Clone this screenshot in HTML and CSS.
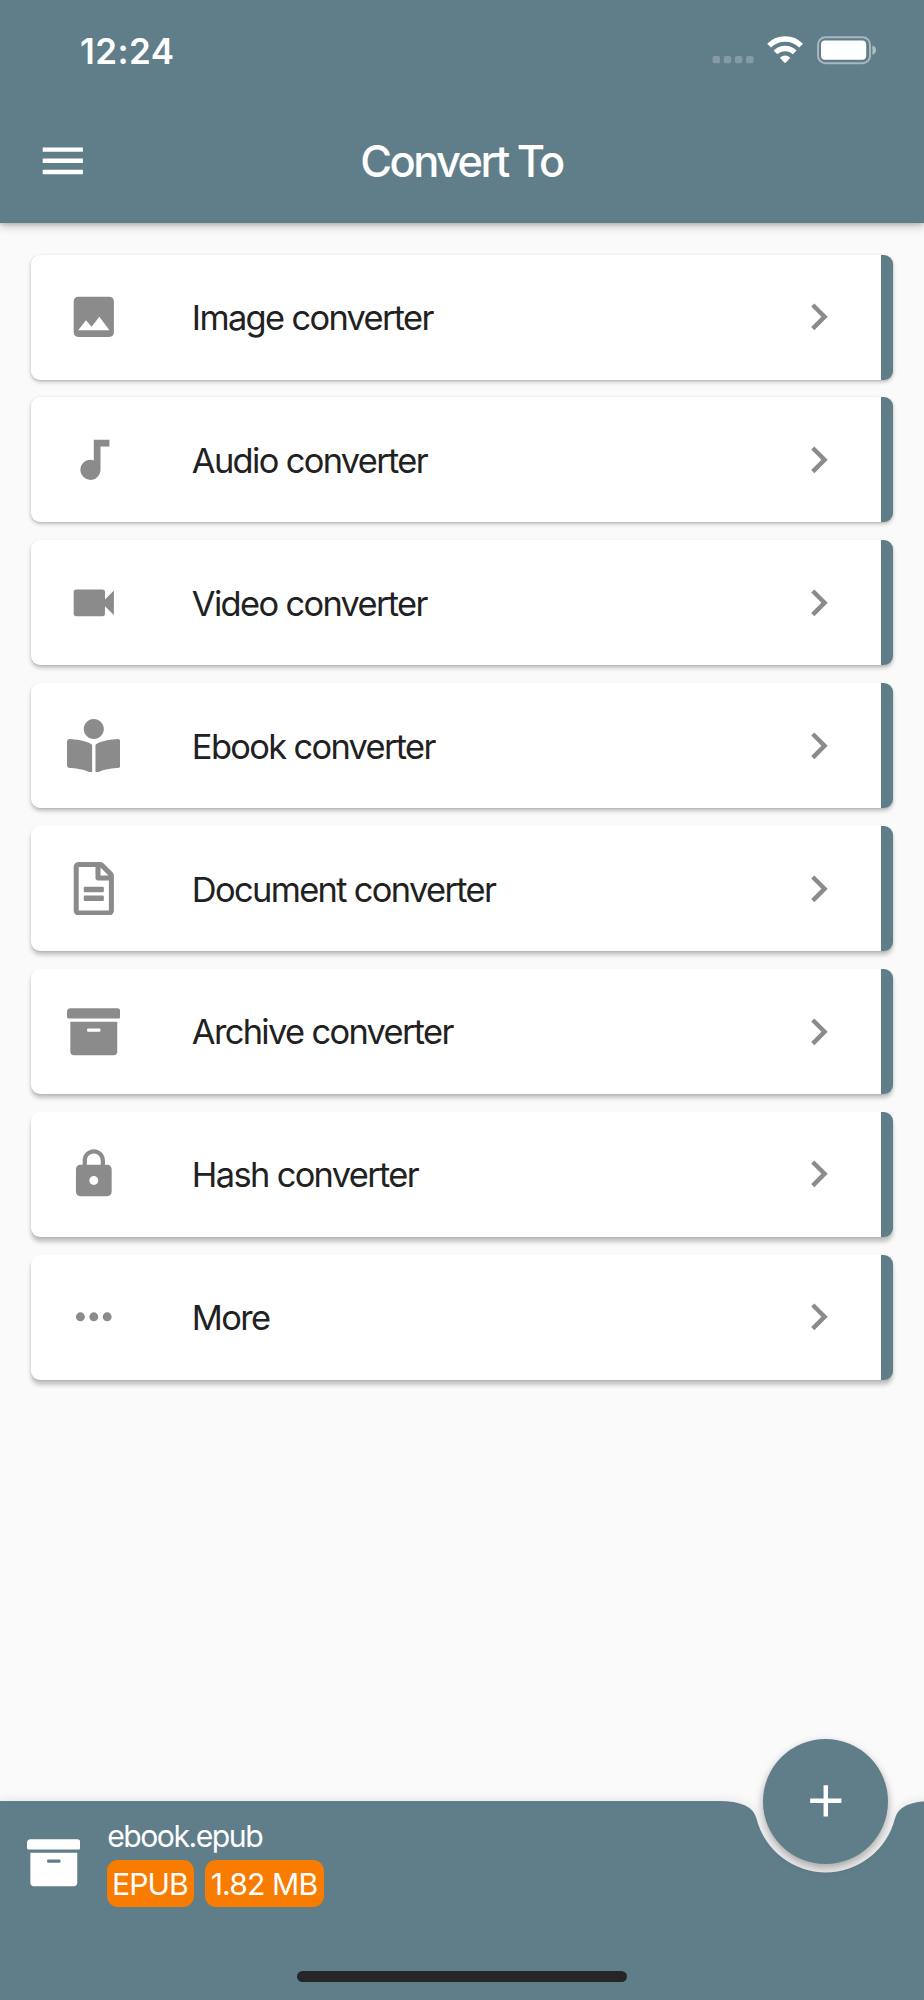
FILE: index.html
```html
<!DOCTYPE html>
<html lang="en">
<head>
<meta charset="utf-8">
<title>Convert To</title>
<link rel="stylesheet" href="styles.css">
</head>
<body>
<div class="screen">
  <header class="header">
    <div class="status">
      <span class="time">12:24</span>
      <svg class="status-icons" width="168" height="32" viewBox="0 0 168 32">
        <g fill="#fff" fill-opacity=".23">
          <rect x="0.5" y="22" width="7.6" height="7.2" rx="2"/>
          <rect x="11.7" y="22" width="7.6" height="7.2" rx="2"/>
          <rect x="22.8" y="22" width="7.6" height="7.2" rx="2"/>
          <rect x="34" y="22" width="7.6" height="7.2" rx="2"/>
        </g>
        <g transform="translate(55.3 2.6)" fill="none" stroke="#fff" stroke-width="5.4">
          <path d="M1.8 9.1A22.5 22.5 0 0 1 33.8 9.1"/>
          <path d="M8.2 15.8A13.6 13.6 0 0 1 27.4 15.8"/>
          <path d="M12.6 21.1Q17.8 16.8 23 21.1L18.6 26Q17.8 26.8 17 26Z" fill="#fff" stroke="none"/>
        </g>
        <rect x="106" y="3.2" width="52" height="26" rx="7.5" fill="none" stroke="#fff" stroke-opacity=".45" stroke-width="2"/>
        <rect x="109" y="6.6" width="45.2" height="19.2" rx="4" fill="#fff"/>
        <path d="M160.4 11.6q3.6 1.2 3.6 4.6t-3.6 4.6z" fill="#fff" fill-opacity=".5"/>
      </svg>
    </div>
    <div class="appbar">
      <svg class="icon menu" viewBox="0 0 24 24"><path d="M3 18h18v-2H3v2zm0-5h18v-2H3v2zm0-7v2h18V6H3z"/></svg>
      <h1 class="title">Convert To</h1>
    </div>
  </header>

  <main class="list">
    <a class="card">
      <svg class="icon" viewBox="0 0 24 24"><path d="M21 19V5c0-1.1-.9-2-2-2H5c-1.1 0-2 .9-2 2v14c0 1.1.9 2 2 2h14c1.1 0 2-.9 2-2zM8.5 13.5l2.5 3.01L14.5 12l4.5 6H5l3.5-4.5z"/></svg>
      <span class="label">Image converter</span>
      <svg class="icon" viewBox="0 0 24 24"><path d="M10 6L8.59 7.41 13.17 12l-4.58 4.59L10 18l6-6z"/></svg>
    </a>
    <a class="card">
      <svg class="icon" viewBox="0 0 24 24"><path d="M12 3v9.28c-.47-.17-.97-.28-1.5-.28C8.01 12 6 14.01 6 16.5S8.01 21 10.5 21c2.31 0 4.2-1.75 4.45-4H15V6h4V3h-7z"/></svg>
      <span class="label">Audio converter</span>
      <svg class="icon" viewBox="0 0 24 24"><path d="M10 6L8.59 7.41 13.17 12l-4.58 4.59L10 18l6-6z"/></svg>
    </a>
    <a class="card">
      <svg class="icon" viewBox="0 0 24 24"><path d="M17 10.5V7c0-.55-.45-1-1-1H4c-.55 0-1 .45-1 1v10c0 .55.45 1 1 1h12c.55 0 1-.45 1-1v-3.5l4 4v-11l-4 4z"/></svg>
      <span class="label">Video converter</span>
      <svg class="icon" viewBox="0 0 24 24"><path d="M10 6L8.59 7.41 13.17 12l-4.58 4.59L10 18l6-6z"/></svg>
    </a>
    <a class="card">
      <svg class="icon" viewBox="0 0 512 512"><path d="M352 96c0-53.02-42.98-96-96-96s-96 42.98-96 96 42.98 96 96 96 96-42.98 96-96zM233.59 241.1c-59.33-36.32-155.43-46.3-203.79-49.05C13.55 191.13 0 203.51 0 219.14v222.8c0 14.33 11.59 26.28 26.49 27.05 43.66 2.29 131.99 10.68 193.04 41.43 9.37 4.72 20.48-1.71 20.48-11.87V252.56c-.01-4.67-2.32-8.95-6.42-11.46zm248.61-49.05c-48.35 2.74-144.46 12.73-203.78 49.05-4.1 2.51-6.41 6.96-6.41 11.63v245.79c0 10.19 11.14 16.63 20.54 11.9 61.04-30.72 149.32-39.11 192.97-41.4 14.9-.78 26.49-12.73 26.49-27.06V219.14c-.01-15.63-13.56-28.01-29.8-27.09z"/></svg>
      <span class="label">Ebook converter</span>
      <svg class="icon" viewBox="0 0 24 24"><path d="M10 6L8.59 7.41 13.17 12l-4.58 4.59L10 18l6-6z"/></svg>
    </a>
    <a class="card">
      <svg class="icon" viewBox="-64 0 512 512"><path d="M288 248v28c0 6.6-5.4 12-12 12H108c-6.6 0-12-5.4-12-12v-28c0-6.6 5.4-12 12-12h168c6.6 0 12 5.4 12 12zm-12 72H108c-6.6 0-12 5.4-12 12v28c0 6.6 5.4 12 12 12h168c6.6 0 12-5.4 12-12v-28c0-6.6-5.4-12-12-12zm108-188.1V464c0 26.5-21.5 48-48 48H48c-26.5 0-48-21.5-48-48V48C0 21.5 21.5 0 48 0h204.1C264.8 0 277 5.1 286 14.1L369.9 98c9 8.9 14.1 21.2 14.1 33.9zm-128-80V128h76.1L256 51.9zM336 464V176H232c-13.3 0-24-10.7-24-24V48H48v416h288z"/></svg>
      <span class="label">Document converter</span>
      <svg class="icon" viewBox="0 0 24 24"><path d="M10 6L8.59 7.41 13.17 12l-4.58 4.59L10 18l6-6z"/></svg>
    </a>
    <a class="card">
      <svg class="icon" viewBox="0 0 512 512"><path d="M32 448c0 17.7 14.3 32 32 32h384c17.7 0 32-14.3 32-32V160H32v288zm160-212c0-6.6 5.4-12 12-12h104c6.6 0 12 5.4 12 12v8c0 6.6-5.4 12-12 12H204c-6.6 0-12-5.4-12-12v-8zM480 32H32C14.3 32 0 46.3 0 64v48c0 8.8 7.2 16 16 16h480c8.8 0 16-7.2 16-16V64c0-17.7-14.3-32-32-32z"/></svg>
      <span class="label">Archive converter</span>
      <svg class="icon" viewBox="0 0 24 24"><path d="M10 6L8.59 7.41 13.17 12l-4.58 4.59L10 18l6-6z"/></svg>
    </a>
    <a class="card">
      <svg class="icon" viewBox="0 0 24 24"><path d="M18 8h-1V6c0-2.76-2.24-5-5-5S7 3.24 7 6v2H6c-1.1 0-2 .9-2 2v10c0 1.1.9 2 2 2h12c1.1 0 2-.9 2-2V10c0-1.1-.9-2-2-2zm-6 9c-1.1 0-2-.9-2-2s.9-2 2-2 2 .9 2 2-.9 2-2 2zm3.1-9H8.9V6c0-1.71 1.39-3.1 3.1-3.1 1.71 0 3.1 1.39 3.1 3.1v2z"/></svg>
      <span class="label">Hash converter</span>
      <svg class="icon" viewBox="0 0 24 24"><path d="M10 6L8.59 7.41 13.17 12l-4.58 4.59L10 18l6-6z"/></svg>
    </a>
    <a class="card">
      <svg class="icon" viewBox="0 0 24 24"><circle cx="6" cy="12" r="2"/><circle cx="12" cy="12" r="2"/><circle cx="18" cy="12" r="2"/></svg>
      <span class="label">More</span>
      <svg class="icon" viewBox="0 0 24 24"><path d="M10 6L8.59 7.41 13.17 12l-4.58 4.59L10 18l6-6z"/></svg>
    </a>
  </main>

  <footer class="footer">
    <svg class="footer-shape" width="924" height="199" viewBox="0 0 924 199"><path d="M0 0H718.6Q752 0 756.45 17.44A71.4 71.4 0 0 0 894.95 17.44Q899.4 0 932.8 0V199H0Z"/></svg>
    <div class="file">
      <svg class="icon" viewBox="0 0 512 512"><path d="M32 448c0 17.7 14.3 32 32 32h384c17.7 0 32-14.3 32-32V160H32v288zm160-212c0-6.6 5.4-12 12-12h104c6.6 0 12 5.4 12 12v8c0 6.6-5.4 12-12 12H204c-6.6 0-12-5.4-12-12v-8zM480 32H32C14.3 32 0 46.3 0 64v48c0 8.8 7.2 16 16 16h480c8.8 0 16-7.2 16-16V64c0-17.7-14.3-32-32-32z"/></svg>
      <div class="info">
        <span class="name">ebook.epub</span>
        <div class="badges">
          <span class="badge format">EPUB</span>
          <span class="badge size">1.82 MB</span>
        </div>
      </div>
    </div>
    <div class="home"></div>
    <button class="fab" aria-label="Add"><svg class="icon" viewBox="0 0 24 24"><path d="M19 13h-6v6h-2v-6H5v-2h6V5h2v6h6v2z"/></svg></button>
  </footer>
</div>
</body>
</html>
```
FILE: styles.css
```css
* { box-sizing: border-box; }

body {
  margin: 0;
  background: #fafafa;
  font-family: Inter, "Liberation Sans", sans-serif;
}

.screen {
  width: 924px;
  height: 2000px;
  display: flex;
  flex-direction: column;
  overflow: hidden;
}

.icon {
  width: 53.6px;
  height: 53.6px;
  flex: none;
  display: block;
  fill: #8b8b8b;
}

.header {
  height: 223.2px;
  flex: none;
  background: #607d8a;
  color: #fff;
  box-shadow: 0 3px 9px rgba(0, 0, 0, .24), 0 2px 3px rgba(0, 0, 0, .1);
}

.status {
  height: 98px;
  padding: 0 44px 0 80px;
  display: flex;
  justify-content: space-between;
}

.time {
  margin-top: 30px;
  font-size: 35px;
  line-height: 42px;
  font-weight: 600;
  letter-spacing: .4px;
}

.status-icons { margin-top: 34px; }

.appbar {
  height: 125px;
  display: grid;
  grid-template-columns: 125px 1fr 125px;
  align-items: center;
}

.menu { justify-self: center; fill: #fff; }

.title {
  margin: 0;
  padding-right: 1px;
  text-align: center;
  font-size: 43.4px;
  line-height: 54px;
  font-weight: 500;
  letter-spacing: -2.55px;
}

.list {
  flex: 1;
  padding: 31.4px 31.2px 0;
  display: flex;
  flex-direction: column;
  gap: 17.86px;
}

.card {
  --drop: 2px;
  height: 125px;
  flex: none;
  padding: 0 35.7px;
  display: flex;
  align-items: center;
  background: #fff;
  border-right: 12px solid #607d8a;
  border-radius: 9px;
  color: #212121;
  box-shadow: 0 var(--drop) 4px rgba(0, 0, 0, .22), 0 1px 2px rgba(0, 0, 0, .1);
}

.card:nth-child(n+3) { --drop: 3px; }
.card:nth-child(n+5) { --drop: 4px; }
.card:nth-child(n+7) { --drop: 5px; }

.label {
  flex: 1;
  padding: 2px 0 0 71.4px;
  font-size: 34.4px;
  line-height: 42px;
  letter-spacing: -1.65px;
}

.footer {
  position: relative;
  height: 199px;
  flex: none;
  display: flex;
  flex-direction: column;
  justify-content: space-between;
  align-items: center;
  color: #fff;
}

.footer-shape {
  position: absolute;
  inset: 0;
  overflow: visible;
  fill: #607d8a;
  filter: drop-shadow(0 -1px 5px rgba(0, 0, 0, .09));
}

.file {
  position: relative;
  align-self: stretch;
  padding: 17px 0 0 26.8px;
  display: flex;
  gap: 26.8px;
}

.file .icon { margin-top: 18px; fill: #fff; }

.name {
  display: block;
  font-size: 30.2px;
  line-height: 37px;
  letter-spacing: -1.5px;
}

.badges { display: flex; gap: 11px; margin-top: 5px; }

.badge {
  height: 47px;
  padding-right: 1.5px;
  display: flex;
  justify-content: center;
  align-items: center;
  border-radius: 11px;
  background: #f77c00;
  font-size: 30.2px;
  letter-spacing: -.9px;
  white-space: nowrap;
}

.format { width: 87px; }
.size { width: 119px; }

.home {
  position: relative;
  width: 330px;
  height: 11px;
  margin-bottom: 18px;
  border-radius: 6px;
  background: #262626;
}

.fab {
  position: absolute;
  left: 763.2px;
  top: -62.5px;
  width: 125px;
  height: 125px;
  padding: 0;
  display: flex;
  justify-content: center;
  align-items: center;
  border: 0;
  border-radius: 50%;
  background: #607d8a;
  box-shadow: 0 4px 8px rgba(0, 0, 0, .35);
}

.fab .icon { fill: #fff; }
```
